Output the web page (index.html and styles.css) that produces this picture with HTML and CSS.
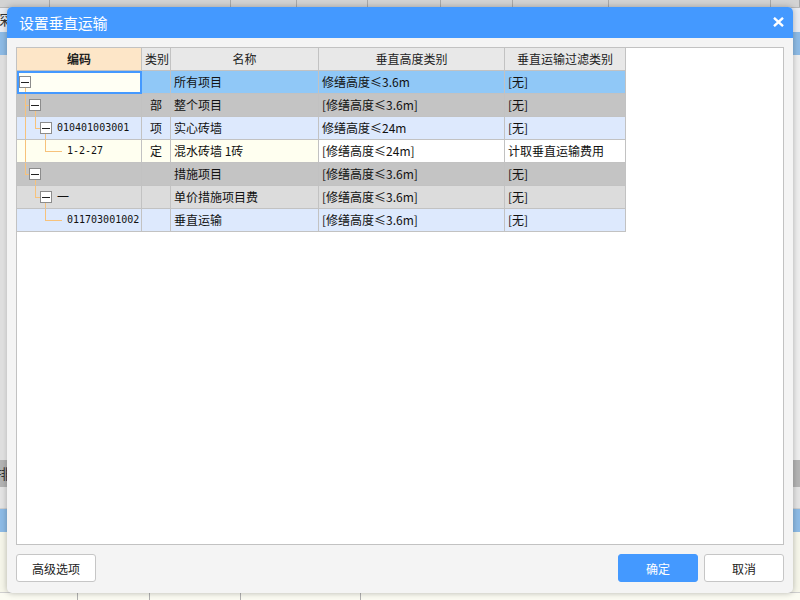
FILE: index.html
```html
<!DOCTYPE html>
<html lang="zh-CN">
<head>
<meta charset="utf-8">
<title>设置垂直运输</title>
<link rel="stylesheet" href="styles.css">
</head>
<body>
<div class="app" aria-hidden="true">
  <div class="bg-head">
    <span class="bh" style="width:50px"></span>
    <span class="bh" style="width:181px"></span>
    <span class="bh" style="width:66px"></span>
    <span class="bh" style="width:71px"></span>
    <span class="bh" style="width:73px"></span>
    <span class="bh" style="width:72px"></span>
    <span class="bh" style="width:96px"></span>
    <span class="bh" style="width:162px"></span>
    <span class="bh" style="width:29px"></span>
  </div>
  <div class="bg-row bg-light"><span class="bg-txt">深</span></div>
  <div class="bg-row bg-sel"></div>
  <div class="bg-fill"></div>
  <div class="bg-row bg-bar"><span class="bg-txt">排</span></div>
  <div class="bg-row bg-plain"></div>
  <div class="bg-row bg-sel"></div>
  <div class="bg-rest"></div>
  <div class="bg-foot">
    <span class="bf" style="width:78px"></span>
    <span class="bf" style="width:72px"></span>
    <span class="bf" style="width:91px"></span>
    <span class="bf" style="width:120px"></span>
  </div>
</div>

<div class="dialog">
  <div class="dlg-title">
    <span class="dlg-caption">设置垂直运输</span>
    <svg class="close" width="11" height="10" viewBox="0 0 11 10"><path d="M1 0.8 L10 9.2 M10 0.8 L1 9.2" stroke="#fff" stroke-width="2.4" fill="none"/></svg>
  </div>
  <div class="dlg-body">
    <div class="panel">
      <div class="grid">
        <div class="c h h-code">编码</div>
        <div class="c h">类别</div>
        <div class="c h">名称</div>
        <div class="c h">垂直高度类别</div>
        <div class="c h">垂直运输过滤类别</div>

        <div class="c tree r-sel t1 focus"><span class="exp x2"></span></div>
        <div class="c r-sel"></div>
        <div class="c r-sel">所有项目</div>
        <div class="c r-sel">修缮高度≤3.6m</div>
        <div class="c r-sel">[无]</div>

        <div class="c tree r-gray t2"><span class="exp x12"></span></div>
        <div class="c r-gray ctr">部</div>
        <div class="c r-gray">整个项目</div>
        <div class="c r-gray">[修缮高度≤3.6m]</div>
        <div class="c r-gray">[无]</div>

        <div class="c tree r-blue t3"><span class="exp x23"></span><span class="code">010401003001</span></div>
        <div class="c r-blue ctr">项</div>
        <div class="c r-blue">实心砖墙</div>
        <div class="c r-blue">修缮高度≤24m</div>
        <div class="c r-blue">[无]</div>

        <div class="c tree r-ivory t4"><span class="code leaf">1-2-27</span></div>
        <div class="c r-ivory ctr">定</div>
        <div class="c r-ivory">混水砖墙 1砖</div>
        <div class="c r-white">[修缮高度≤24m]</div>
        <div class="c r-white">计取垂直运输费用</div>

        <div class="c tree r-gray t5"><span class="exp x12"></span></div>
        <div class="c r-gray"></div>
        <div class="c r-gray">措施项目</div>
        <div class="c r-gray">[修缮高度≤3.6m]</div>
        <div class="c r-gray">[无]</div>

        <div class="c tree r-lgray t6"><span class="exp x23"></span><span class="code">一</span></div>
        <div class="c r-lgray"></div>
        <div class="c r-lgray">单价措施项目费</div>
        <div class="c r-lgray">[修缮高度≤3.6m]</div>
        <div class="c r-lgray">[无]</div>

        <div class="c tree r-blue t7"><span class="code leaf">011703001002</span></div>
        <div class="c r-blue"></div>
        <div class="c r-blue">垂直运输</div>
        <div class="c r-blue">[修缮高度≤3.6m]</div>
        <div class="c r-blue">[无]</div>
      </div>
    </div>
  </div>
  <div class="dlg-foot">
    <button class="btn">高级选项</button>
    <span class="spacer"></span>
    <button class="btn btn-primary">确定</button>
    <button class="btn">取消</button>
  </div>
</div>
</body>
</html>
```

FILE: styles.css
```css
* { box-sizing: border-box; }
html, body {
  margin: 0;
  padding: 0;
  width: 800px;
  height: 600px;
  overflow: hidden;
  font-family: "Noto Sans CJK SC", "Noto Sans", sans-serif;
  color: #1a1a1a;
}

/* ---------- background application (behind modal) ---------- */
.app {
  width: 800px;
  height: 600px;
  display: flex;
  flex-direction: column;
  background: #ebebeb;
}
.bg-head {
  height: 8px;
  display: flex;
  background: #d3d3d3;
  border-bottom: 1px solid #b8b8b8;
}
.bh { height: 100%; border-right: 1px solid #a9a9a9; flex: none; }
.bg-row { height: 23px; flex: none; font-size: 14px; line-height: 23px; }
.bg-light { height: 24px; background: #e9ecf2; }
.bg-sel { background: #8dbbe6; }
.bg-bar { height: 27px; background: #b4b4b4; line-height: 27px; }
.bg-plain { height: 22px; background: #e4e4e4; border-bottom: 1px solid #cfcfcf; }
.bg-fill { height: 405px; flex: none; background: linear-gradient(90deg, #dedede, #eeeeee 8px, #eeeeee); }
.bg-rest { flex: 1; background: #f6f6ea; }
.bg-txt { padding-left: 0; margin-left: -4px; color: #333; }
.bg-foot { height: 8px; display: flex; background: #fbfbf2; border-top: 1px solid #cfcfcf; }
.bf { height: 100%; border-right: 1px solid #b0b0b0; flex: none; }

/* ---------- dialog ---------- */
.dialog {
  position: absolute;
  left: 7px;
  top: 7px;
  width: 786px;
  height: 586px;
  background: #f4f4f4;
  border-radius: 5px;
  box-shadow: 0 0 6px rgba(0, 0, 0, 0.28);
  display: flex;
  flex-direction: column;
  overflow: hidden;
}
.dlg-title {
  height: 31px;
  flex: none;
  background: #4499ff;
  color: #fff;
  display: flex;
  align-items: center;
  padding: 0 9px 0 12px;
}
.dlg-caption { font-size: 15px; flex: 1; letter-spacing: -0.3px; }
.close { display: block; margin-top: -1px; }

.dlg-body { padding: 9px 9px 0; flex: none; }
.panel {
  height: 498px;
  background: #fff;
  border: 1px solid #c2c2c2;
}

.grid {
  display: grid;
  grid-template-columns: 125px 29px 148px 186px 121px;
  grid-auto-rows: 23px;
  width: 609px;
}
.c {
  border-right: 1px solid #c2c2c2;
  border-bottom: 1px solid #c2c2c2;
  font-size: 12px;
  line-height: 22px;
  padding: 0 3px;
  white-space: nowrap;
  overflow: hidden;
  color: #111;
}
.h { background: #e8e8e8; text-align: center; color: #222; }
.h-code { background: #fde6c8; font-weight: bold; }
.ctr { text-align: center; }

.r-sel { background-color: #90c8f7; }
.r-gray { background-color: #c4c4c4; }
.r-lgray { background-color: #dcdcdc; }
.r-blue { background-color: #dde9fd; }
.r-ivory { background-color: #fffff0; }
.r-white { background-color: #ffffff; }

.focus {
  background-color: #fffff4;
  outline: 2px solid #4499ff;
  outline-offset: -2px;
}

/* tree column */
.tree {
  display: flex;
  align-items: center;
  padding: 0;
  background-repeat: no-repeat;
}
.exp {
  flex: none;
  width: 12px;
  height: 12px;
  border: 1px solid #8c8c8c;
  background: linear-gradient(#222, #222) center / 8px 1px no-repeat, #fff;
}
.x2 { margin-left: 2px; }
.x12 { margin-left: 12px; }
.x23 { margin-left: 23px; }
.code {
  margin-left: 5px;
  font-family: "DejaVu Sans Mono", "Noto Sans CJK SC", monospace;
  font-size: 10px;
  color: #111;
}
.leaf { margin-left: 50px; }

.t1 {
  background-image: linear-gradient(#f7c27b, #f7c27b);
  background-position: 8px 17px;
  background-size: 1px 100%;
}
.t2 {
  background-image:
    linear-gradient(#f7c27b, #f7c27b),
    linear-gradient(#f7c27b, #f7c27b),
    linear-gradient(#f7c27b, #f7c27b);
  background-position: 8px 0, 8px 11px, 18px 17px;
  background-size: 1px 100%, 4px 1px, 1px 100%;
}
.t3 {
  background-image:
    linear-gradient(#f7c27b, #f7c27b),
    linear-gradient(#f7c27b, #f7c27b),
    linear-gradient(#f7c27b, #f7c27b),
    linear-gradient(#f7c27b, #f7c27b);
  background-position: 8px 0, 18px 0, 18px 11px, 28px 17px;
  background-size: 1px 100%, 1px 12px, 5px 1px, 1px 100%;
}
.t4 {
  background-image:
    linear-gradient(#f7c27b, #f7c27b),
    linear-gradient(#f7c27b, #f7c27b),
    linear-gradient(#f7c27b, #f7c27b);
  background-position: 8px 0, 28px 0, 28px 11px;
  background-size: 1px 100%, 1px 12px, 17px 1px;
}
.t5 {
  background-image:
    linear-gradient(#f7c27b, #f7c27b),
    linear-gradient(#f7c27b, #f7c27b),
    linear-gradient(#f7c27b, #f7c27b);
  background-position: 8px 0, 8px 11px, 18px 17px;
  background-size: 1px 12px, 4px 1px, 1px 100%;
}
.t6 {
  background-image:
    linear-gradient(#f7c27b, #f7c27b),
    linear-gradient(#f7c27b, #f7c27b),
    linear-gradient(#f7c27b, #f7c27b);
  background-position: 18px 0, 18px 11px, 28px 17px;
  background-size: 1px 12px, 5px 1px, 1px 100%;
}
.t7 {
  background-image:
    linear-gradient(#f7c27b, #f7c27b),
    linear-gradient(#f7c27b, #f7c27b);
  background-position: 28px 0, 28px 11px;
  background-size: 1px 12px, 17px 1px;
}
.t6 .code { font-family: "Noto Sans CJK SC", sans-serif; font-size: 12px; }

/* footer */
.dlg-foot {
  display: flex;
  gap: 6px;
  padding: 9px 9px 0;
}
.spacer { flex: 1; }
.btn {
  width: 80px;
  height: 28px;
  border: 1px solid #c6c6c6;
  border-radius: 3px;
  background: #fff;
  font-family: "Noto Sans CJK SC", sans-serif;
  font-size: 12px;
  color: #222;
  padding: 0;
}
.btn-primary {
  background: #4499ff;
  border-color: #4499ff;
  color: #fff;
}
```
